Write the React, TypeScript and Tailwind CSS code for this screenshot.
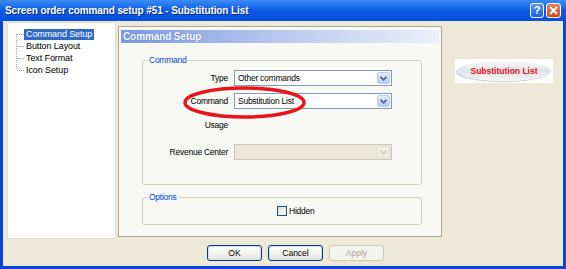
import React from 'react';

const treeItems = ['Command Setup', 'Button Layout', 'Text Format', 'Icon Setup'];

function Chevron({ disabled }: { disabled?: boolean }) {
  return (
    <svg width="7" height="5" viewBox="0 0 7 5">
      <path d="M0.5 0.8 L3.5 3.8 L6.5 0.8" fill="none" stroke={disabled ? '#C9C7BA' : '#4D6185'} strokeWidth="1.6" />
    </svg>
  );
}

function Select({ value, disabled }: { value?: string; disabled?: boolean }) {
  return (
    <div
      className={`flex h-[16px] w-[158px] items-stretch border ${
        disabled ? 'border-[#C9C7BA] bg-[#ECE9D8]' : 'border-[#7F9DB9] bg-white'
      }`}
    >
      <div className="flex-1 pl-[3px] text-[8.5px] leading-[14px] tracking-[-0.25px] text-black">{value}</div>
      <div
        className={`m-[1px] flex w-[13px] items-center justify-center rounded-[2px] border ${
          disabled
            ? 'border-[#E2E0D4] bg-[#F2F0E6]'
            : 'border-[#B9CDF6] bg-linear-to-b from-[#E2EBFD] to-[#B6CBF6]'
        }`}
      >
        <Chevron disabled={disabled} />
      </div>
    </div>
  );
}

function TreeConnector({ index, count }: { index: number; count: number }) {
  const top = index === 0 ? 6 : 0;
  const bottom = index === count - 1 ? 6 : 12;
  return (
    <svg width="8" height="12" viewBox="0 0 8 12" className="shrink-0">
      <line x1="0.5" y1={top} x2="0.5" y2={bottom} stroke="#A0A0A0" strokeDasharray="1 1" />
      <line x1="1" y1="6.5" x2="8" y2="6.5" stroke="#A0A0A0" strokeDasharray="1 1" />
    </svg>
  );
}

function XpButton({ label, disabled }: { label: string; disabled?: boolean }) {
  return (
    <div
      className={`flex h-[16px] w-[55px] items-center justify-center rounded-[3px] border text-[8.5px] ${
        disabled
          ? 'border-[#C9C7BA] bg-[#F4F3EE] text-[#ACA899]'
          : 'border-[#003C74] bg-linear-to-b from-white to-[#E6E5DF] text-black shadow-[inset_0_0_0_1px_#CFDDF6]'
      }`}
    >
      {label}
    </div>
  );
}

function Label({ children }: { children: React.ReactNode }) {
  return <div className="w-[85px] text-right text-[8.5px] tracking-[-0.25px] text-black">{children}</div>;
}

export default function App() {
  return (
    <div className="flex h-[269px] w-[566px] flex-col bg-[#0842D6] font-['Liberation_Sans',Arial,sans-serif]">
      {/* Title bar */}
      <div className="flex h-[21px] items-center bg-linear-to-b from-[#3C8DF6] via-[#0A5AE6] to-[#0450DC] pl-[5px] pr-[5px]">
        <div className="flex-1 text-[10px] font-bold tracking-[-0.1px] text-white [text-shadow:1px_1px_0_#0A2A7A]">
          Screen order command setup #51 - Substitution List
        </div>
        <div className="flex h-[15px] w-[14px] items-center justify-center rounded-[3px] border border-white bg-linear-to-b from-[#5A96F5] to-[#1E5DE0] text-[11px] font-bold text-white">
          ?
        </div>
        <div className="ml-[2px] flex h-[15px] w-[15px] items-center justify-center rounded-[3px] border border-white bg-linear-to-b from-[#E9835F] to-[#D2401A]">
          <svg width="9" height="9" viewBox="0 0 9 9">
            <path d="M1 1 L8 8 M8 1 L1 8" stroke="white" strokeWidth="1.8" />
          </svg>
        </div>
      </div>

      {/* Body */}
      <div className="mx-[3px] mb-[3px] flex flex-1 flex-col bg-[#ECE9D8]">
        <div className="flex items-start pl-[4px] pt-[1px]">
          {/* Tree */}
          <div className="h-[217px] w-[109px] border border-[#E4E1D4] bg-white pl-[8px] pt-[5px]">
            {treeItems.map((item, i) => (
              <div key={item} className="flex h-[12px] items-center">
                <TreeConnector index={i} count={treeItems.length} />
                <span
                  className={`px-[2px] text-[9px] leading-[11px] tracking-[-0.1px] ${
                    i === 0 ? 'bg-[#316AC5] text-white' : 'text-black'
                  }`}
                >
                  {item}
                </span>
              </div>
            ))}
          </div>

          {/* Main panel */}
          <div className="ml-[2px] mt-[4px] h-[211px] w-[324px] border border-[#ACA899] bg-[#F8F8F4]">
            <div className="mx-[2px] mt-[3px] flex h-[13px] items-center bg-linear-to-r from-[#7A99DF] via-[#B9C9EE] to-[#ECF0FA] px-[2px] text-[10px] font-bold tracking-[-0.1px] text-white [text-shadow:0_0_1px_#3A5AA8]">
              Command Setup
            </div>

            {/* Command group */}
            <div className="relative ml-[23px] mt-[17px] h-[125px] w-[280px] rounded-[3px] border border-[#D0D0BF] pt-[9px]">
              <span className="absolute left-[5px] top-[-7px] bg-[#F8F8F4] px-[1px] text-[8.5px] leading-[12px] tracking-[-0.25px] text-[#0046D5]">
                Command
              </span>
              <div className="flex h-[16px] items-center">
                <Label>Type</Label>
                <div className="ml-[6px]">
                  <Select value="Other commands" />
                </div>
              </div>
              <div className="mt-[7px] flex h-[16px] items-center">
                <Label>Command</Label>
                <div className="ml-[6px]">
                  <Select value="Substitution List" />
                </div>
              </div>
              <div className="mt-[10px] flex h-[13px] items-center">
                <Label>Usage</Label>
              </div>
              <div className="mt-[12px] flex h-[16px] items-center">
                <Label>Revenue Center</Label>
                <div className="ml-[6px]">
                  <Select disabled />
                </div>
              </div>
              <svg
                className="pointer-events-none absolute left-[40px] top-[25px]"
                width="123"
                height="33"
                viewBox="0 0 123 33"
              >
                <ellipse cx="61.5" cy="16.5" rx="59.5" ry="14.5" fill="none" stroke="#E8141B" strokeWidth="3.5" />
              </svg>
            </div>

            {/* Options group */}
            <div className="relative ml-[23px] mt-[12px] flex h-[28px] w-[280px] items-center rounded-[3px] border border-[#D0D0BF] pl-[134px]">
              <span className="absolute left-[5px] top-[-7px] bg-[#F8F8F4] px-[1px] text-[8.5px] leading-[12px] tracking-[-0.25px] text-[#0046D5]">
                Options
              </span>
              <div className="h-[10px] w-[10px] border border-[#1C5180] bg-linear-to-br from-[#DCDCD7] to-white" />
              <span className="ml-[2px] text-[8.5px] tracking-[-0.25px] text-black">Hidden</span>
            </div>
          </div>

          {/* Substitution List graphic */}
          <div className="ml-[13px] mt-[37px] flex h-[24px] w-[98px] items-center justify-center bg-white">
            <div className="flex h-[20px] w-[94px] items-center justify-center rounded-[50%] bg-linear-to-b from-[#F8F9FB] via-[#DFE2E8] to-[#F7F8FA] shadow-[-1px_1px_1px_#C4C8D0]">
              <span className="text-[8.5px] font-bold text-[#E3101B]">Substitution List</span>
            </div>
          </div>
        </div>

        {/* Buttons */}
        <div className="mt-[6px] flex gap-[6px] pl-[204px]">
          <XpButton label="OK" />
          <XpButton label="Cancel" />
          <XpButton label="Apply" disabled />
        </div>
      </div>
    </div>
  );
}
